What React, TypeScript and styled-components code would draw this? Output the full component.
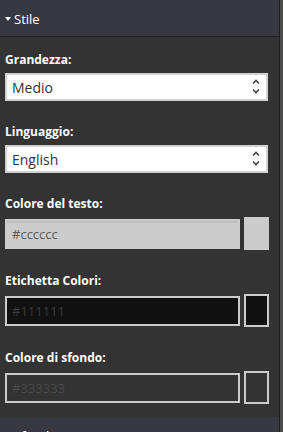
import React from 'react';
import styled, { createGlobalStyle } from 'styled-components';

const GlobalStyle = createGlobalStyle`
  html, body {
    margin: 0;
    padding: 0;
    background: #4c4c4c;
    font-family: "Open Sans", "Noto Sans", sans-serif;
  }
`;

const Panel = styled.div`
  width: 279px;
  height: 432px;
  overflow: hidden;
  background: #333333;
  border-right: 1px solid #1f1f1f;
`;

const SectionHeader = styled.div`
  height: 37px;
  box-sizing: border-box;
  display: flex;
  align-items: center;
  gap: 3px;
  padding-left: 5px;
  background: #383843;
  border-bottom: 1px solid #222226;
  color: #ffffff;
  font-size: 13px;
  padding-top: 1px;
`;

const Caret = styled.span<{ $open?: boolean }>`
  width: 0;
  height: 0;
  border-left: 3.5px solid transparent;
  border-right: 3.5px solid transparent;
  border-top: 4px solid #ffffff;
  transform: ${(p) => (p.$open ? 'none' : 'rotate(-90deg)')};
  margin-top: 1px;
`;

const Content = styled.div`
  padding: 15px 0 13px 5px;
  display: flex;
  flex-direction: column;
  gap: 23px;
`;

const Group = styled.div`
  display: flex;
  flex-direction: column;
  gap: 5px;
`;

const Label = styled.label`
  color: #ffffff;
  font-size: 12px;
  font-weight: 700;
  line-height: 16px;
`;

const SelectWrap = styled.div`
  position: relative;
  width: 263px;
`;

const Select = styled.select`
  appearance: none;
  width: 100%;
  height: 28px;
  box-sizing: border-box;
  border: 2px solid #d2d2d2;
  background: #ffffff;
  color: #333333;
  font-family: "Open Sans", "Noto Sans", sans-serif;
  font-size: 14px;
  padding: 0 0 0 5px;
  outline: none;
`;

const Arrows = styled.svg`
  position: absolute;
  right: 8px;
  top: 6px;
  pointer-events: none;
`;

const ColorRow = styled.div`
  display: flex;
  align-items: center;
  gap: 4px;
`;

const ColorInput = styled.input<{ $bg: string; $fg: string }>`
  width: 235px;
  height: 30px;
  box-sizing: border-box;
  border: 2px solid #cbcbcb;
  background: ${(p) => p.$bg};
  color: ${(p) => p.$fg};
  font-family: "Open Sans", "Noto Sans", sans-serif;
  font-size: 13px;
  padding: 0 0 0 5px;
  outline: none;
  box-shadow: inset 0 2px 0 ${(p) => (p.$bg === '#cccccc' ? '#bdbdbd' : 'transparent')};
`;

const Swatch = styled.div<{ $color: string }>`
  width: 25px;
  height: 33px;
  box-sizing: border-box;
  border: 2px solid #cbcbcb;
  background: ${(p) => p.$color};
`;

function UpDown() {
  return (
    <Arrows width="8" height="15" viewBox="0 0 8 15">
      <path d="M1 4.5 L4 1.5 L7 4.5" fill="none" stroke="#444" strokeWidth="1.6" />
      <path d="M1 10.5 L4 13.5 L7 10.5" fill="none" stroke="#444" strokeWidth="1.6" />
    </Arrows>
  );
}

const colors = [
  { label: 'Colore del testo:', value: '#cccccc', fg: '#5a5a5a' },
  { label: 'Etichetta Colori:', value: '#111111', fg: '#3a3a3a' },
  { label: 'Colore di sfondo:', value: '#333333', fg: '#4a4a4a' },
];

export default function App() {
  return (
    <>
      <GlobalStyle />
      <Panel>
        <SectionHeader>
          <Caret $open />
          Stile
        </SectionHeader>
        <Content>
          <Group>
            <Label>Grandezza:</Label>
            <SelectWrap>
              <Select defaultValue="medio">
                <option value="piccolo">Piccolo</option>
                <option value="medio">Medio</option>
                <option value="grande">Grande</option>
              </Select>
              <UpDown />
            </SelectWrap>
          </Group>
          <Group>
            <Label>Linguaggio:</Label>
            <SelectWrap>
              <Select defaultValue="en">
                <option value="it">Italiano</option>
                <option value="en">English</option>
              </Select>
              <UpDown />
            </SelectWrap>
          </Group>
          {colors.map((c) => (
            <Group key={c.label}>
              <Label>{c.label}</Label>
              <ColorRow>
                <ColorInput $bg={c.value} $fg={c.fg} defaultValue={c.value} />
                <Swatch $color={c.value} />
              </ColorRow>
            </Group>
          ))}
        </Content>
        <SectionHeader>
          <Caret />
          Sfondo
        </SectionHeader>
      </Panel>
    </>
  );
}
